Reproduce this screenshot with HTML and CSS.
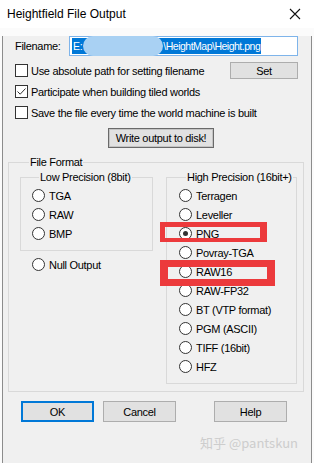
FILE: index.html
```html
<!DOCTYPE html>
<html lang="en">
<head>
  <meta charset="UTF-8">
  <title>Heightfield File Output</title>
  <link rel="stylesheet" href="styles.css">
</head>
<body>
  <div class="titlebar">
    <span class="title">Heightfield File Output</span>
    <svg class="close" width="12" height="12" viewBox="0 0 12 12"><path d="M1 1 L11 11 M11 1 L1 11" stroke="#111" stroke-width="1.1" fill="none"/></svg>
  </div>

  <div class="dialog">
    <div class="top">
      <div class="file-row">
        <span class="lbl">Filename:</span>
        <div class="field"><span class="sel">E:<span class="blob"></span><span class="path">\HeightMap\Height.png</span></span></div>
      </div>

      <div class="checks">
        <div class="check-row"><span class="box"></span><span>Use absolute path for setting filename</span><button class="btn set">Set</button></div>
        <div class="check-row"><span class="box checked"><svg width="11" height="11" viewBox="0 0 11 11"><path d="M1.5 5.5 L4.2 8.2 L9.5 2.5" stroke="#333" stroke-width="1" fill="none"/></svg></span><span>Participate when building tiled worlds</span></div>
        <div class="check-row"><span class="box"></span><span>Save the file every time the world machine is built</span></div>
      </div>

      <button class="btn write">Write output to disk!</button>
    </div>

    <!-- formatos -->
    <fieldset class="group outer">
      <legend>File Format</legend>
      <div class="cols">
        <div class="left-col">
          <fieldset class="group low">
            <legend>Low Precision (8bit)</legend>
            <div class="radio"><span class="dot"></span>TGA</div>
            <div class="radio"><span class="dot"></span>RAW</div>
            <div class="radio"><span class="dot"></span>BMP</div>
          </fieldset>
          <div class="radio null"><span class="dot"></span>Null Output</div>
        </div>
        <fieldset class="group high">
          <legend>High Precision (16bit+)</legend>
          <div class="radio"><span class="dot"></span>Terragen</div>
          <div class="radio"><span class="dot"></span>Leveller</div>
          <div class="radio marked"><span class="dot on"></span>PNG<span class="mark mark-png"></span></div>
          <div class="radio"><span class="dot"></span>Povray-TGA</div>
          <div class="radio marked"><span class="dot"></span>RAW16<span class="mark mark-raw"></span></div>
          <div class="radio"><span class="dot"></span>RAW-FP32</div>
          <div class="radio"><span class="dot"></span>BT (VTP format)</div>
          <div class="radio"><span class="dot"></span>PGM (ASCII)</div>
          <div class="radio"><span class="dot"></span>TIFF (16bit)</div>
          <div class="radio"><span class="dot"></span>HFZ</div>
        </fieldset>
      </div>
    </fieldset>

    <div class="buttons">
      <button class="btn ok">OK</button>
      <button class="btn cancel">Cancel</button>
      <button class="btn help">Help</button>
    </div>

    <div class="watermark">知乎 @pantskun</div>
  </div>
</body>
</html>
```

FILE: styles.css
```css
body {
  margin: 0;
  background-color: #fbfbfb;
  font-family: "Liberation Sans", Arial, sans-serif;
  font-size: 11px;
  letter-spacing: -0.3px;
  color: #000;
  white-space: nowrap;
}

.titlebar {
  height: 28px;
  background-color: #fff;
  display: flex;
  align-items: center;
  padding-left: 7px;
}

.title {
  font-size: 12px;
  letter-spacing: 0;
}

.close {
  margin-left: auto;
  margin-right: 13px;
}

.dialog {
  margin-left: 2px;
  width: 310px;
  height: 432px;
  box-sizing: border-box;
  border: 1px solid #8c8c8c;
  border-top: none;
  background-color: #f0f0f0;
  padding: 0 7px 0 5px;
}

.top {
  padding: 0 6px 0 7px;
}

.file-row {
  display: flex;
  align-items: center;
  margin-top: 8px;
  height: 20px;
}

.lbl {
  width: 54px;
}

.field {
  flex: 1;
  height: 20px;
  box-sizing: border-box;
  border: 1px solid #7eb4ea;
  background-color: #fff;
  display: flex;
  align-items: center;
  padding-left: 2px;
}

.sel {
  display: flex;
  align-items: center;
  height: 16px;
  background-color: #0078d7;
  color: #fff;
  padding: 0 1px;
  font-size: 10.5px;
}

.path {
  letter-spacing: -0.5px;
}

.blob {
  width: 80px;
  height: 20px;
  border-radius: 10px;
  background-color: #a9d1f3;
  margin: 0 0 0 1px;
}

.checks {
  margin-top: 4px;
}

.check-row {
  display: flex;
  align-items: center;
  height: 21px;
}

.box {
  width: 13px;
  height: 13px;
  box-sizing: border-box;
  border: 1px solid #333;
  background-color: #fff;
  margin-right: 3px;
  display: flex;
  align-items: center;
  justify-content: center;
}

.btn {
  font: inherit;
  letter-spacing: inherit;
  color: #000;
  background-color: #e1e1e1;
  border: 1px solid #adadad;
  padding: 0;
  box-sizing: border-box;
}

.set {
  margin-left: auto;
  width: 68px;
  height: 17px;
}

.write {
  display: block;
  margin: 5px 0 0 93px;
  width: 106px;
  height: 20px;
  border: 1px solid #6a6a6a;
  box-shadow: inset 0 0 0 1px #c4c4c4;
}

/* grupos */
.group {
  margin: 0;
  border: 1px solid #d9d9d9;
  min-width: 0;
}

.group legend {
  padding: 0 1px;
  line-height: 14px;
}

.outer {
  margin-top: 7px;
  padding: 1px 6px 7px 11px;
}

.outer > legend {
  margin-left: 9px;
}

.cols {
  display: flex;
  gap: 13px;
  align-items: flex-start;
}

.low {
  width: 133px;
  box-sizing: border-box;
  padding: 2px 0 7px 11px;
}

.high {
  width: 131px;
  box-sizing: border-box;
  padding: 2px 0 7px 12px;
}

.low legend,
.high legend {
  margin-left: 7px;
}

.radio {
  display: flex;
  align-items: center;
  height: 19px;
}

.dot {
  width: 13px;
  height: 13px;
  box-sizing: border-box;
  border: 1px solid #333;
  border-radius: 50%;
  background-color: #fff;
  margin-right: 4px;
  display: flex;
  align-items: center;
  justify-content: center;
}

.dot.on::after {
  content: "";
  width: 5px;
  height: 5px;
  border-radius: 50%;
  background-color: #333;
}

.null {
  margin-top: 4px;
  padding-left: 12px;
}

.buttons {
  display: flex;
  margin-top: 9px;
  padding-left: 13px;
}

.buttons .btn {
  width: 73px;
  height: 21px;
}

.ok {
  border: 2px solid #0078d7;
}

.cancel {
  margin-left: 9px;
}

.help {
  margin-left: 38px;
}

.watermark {
  margin-top: 13px;
  padding-left: 192px;
  line-height: 15px;
  font-family: "Noto Sans CJK SC", "Noto Sans", sans-serif;
  font-size: 13px;
  letter-spacing: 0;
  color: #cdcdcd;
}

/* anotaciones en rojo */
.marked {
  position: relative;
}

.mark {
  position: absolute;
  left: -19px;
  top: -2px;
  border: solid #ec3a3c;
}

.mark-png {
  width: 95px;
  height: 11px;
  border-width: 5px 7px 4px 5px;
}

.mark-raw {
  width: 99px;
  height: 12px;
  border-width: 7px 8px 7px 8px;
}
```
